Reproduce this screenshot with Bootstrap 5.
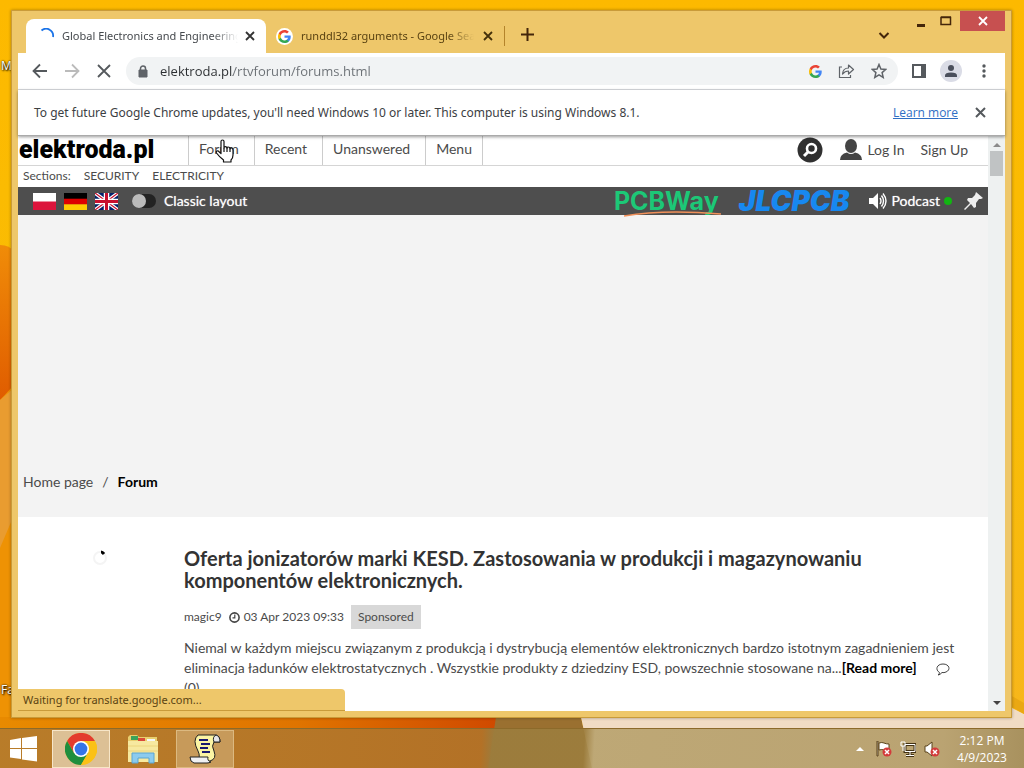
<!DOCTYPE html>
<html lang="en">
<head>
<meta charset="utf-8">
<meta name="viewport" content="width=device-width, initial-scale=1">
<title>Global Electronics and Engineering Forum</title>
<link href="https://cdn.jsdelivr.net/npm/bootstrap@5.3.0/dist/css/bootstrap.min.css" rel="stylesheet">
<style>
:root { --frame: #eec76a; --ui: "Open Sans", "Noto Sans", sans-serif; --site: Lato, "Noto Sans", sans-serif; }
body { font-family: var(--ui); font-size: 12px; line-height: 20px; color: #3c4043; }
button { background: none; border: 0; padding: 0; color: inherit; line-height: 1; }
svg { display: block; flex: none; }
.wallpaper { position: absolute; inset: 0; width: 100%; height: 100%; }
.desk-label { position: absolute; left: 1px; color: #fff; text-shadow: 1px 1px 2px #000, 0 0 2px #000; }
.desk-area { padding: 10px 12px 10px 11px; }
.win { background: var(--frame); border: 1px solid #c99b3a; padding: 0 6px 6px; box-shadow: 0 0 3px #0005; }
.strip { height: 42px; padding-left: 8px; }
.browser-tab { height: 34px; width: 240px; padding: 0 10px 0 14px; gap: 6px; }
.browser-tab.current { background: #fff; border-radius: 8px 8px 0 0; color: #45494d; }
.tab-title { flex: 1; white-space: nowrap; overflow: hidden; text-align: left; font-family: "Noto Sans", sans-serif; font-size: 11px;
  -webkit-mask-image: linear-gradient(90deg, #000 85%, transparent); mask-image: linear-gradient(90deg, #000 85%, transparent); }
.other { width: 239px; color: #5a4312; border-right: 1px solid #b4842b; height: 20px; margin-top: 8px; padding-left: 10px; gap: 8px; }
.disc { background: #fff; border-radius: 50%; padding: 2px; }
.win-ctl { color: #44260a; height: 20px; margin-left: 20px; }
.win-close { background: #c75050; width: 45px; height: 20px; color: #fff; }
.toolbar { height: 37px; border-bottom: 1px solid #dadce0; padding: 0 13px 0 14px; color: #5f6368; background: #fff; gap: 14px; }
.nav-btns { gap: 16px; }
.omni { background: #f1f3f4; border-radius: 14px; height: 28px; padding: 0 11px 0 12px; }
.omni input { flex: 1; min-width: 0; border: 0; outline: 0; padding: 0; font-size: 13px; color: transparent;
  background: linear-gradient(90deg, #2b2e31 77px, #6a6f74 77px); -webkit-background-clip: text; background-clip: text; }
.avatar { background: #dadce6; border-radius: 50%; padding: 4px; }
.info { height: 46px; padding: 0 18px 0 16px; background: #fff; border-bottom: 1px solid #aaa; box-shadow: 0 1px 3px #0006; z-index: 2; position: relative; }
.info span { font-family: "Noto Sans", sans-serif; }
.info a { color: #2f6fc4; }
.view { background: #fff; min-height: 0; font-family: var(--site); color: #4b4b4b; }
.doc { min-width: 0; overflow: hidden; }
.top { height: 30px; border-bottom: 1px solid #d5d5d5; font-size: 14px; }
.brand-name { font: 900 25px/28px Roboto, sans-serif; color: #000; text-decoration: none; width: 170px; padding-left: 1px; }
.site-link { color: #4b4b4b; text-decoration: none; }
.menu-item { padding: 3px 15px 0 10px; border-left: 1px solid #ccc; }
.menu-item:last-child { border-right: 1px solid #ccc; padding-right: 10px; }
.account { padding-bottom: 2px; }
.sections { height: 21px; padding-left: 5px; gap: 13px; font-size: 12px; }
.dark { height: 28px; background: #4e4e4e; color: #fff; font-size: 14px; padding: 0 4px 0 15px; }
.dark label, .dark span { text-shadow: 0 0 1px #fffa; }
.toggle { appearance: none; width: 24px; height: 14px; border-radius: 7px; background: #232323; margin: 0 8px 0 14px; }
.toggle::before { content: ""; display: block; width: 14px; height: 14px; border-radius: 50%; background: #bbb; }
.pcb { font: 700 25px/24px Inter, sans-serif; color: #1cc877; text-decoration: none; position: relative; }
.swoosh { position: absolute; left: 10px; top: 21px; }
.jlc { font: italic 900 28px/26px Inter, sans-serif; color: #1788f0; text-decoration: none; }
.live { width: 8px; height: 8px; border-radius: 50%; background: #12b512; }
.banner { height: 302px; background: #f3f3f3; padding: 0 5px 25px; font-size: 14px; }
.slash { margin: 0 9px; }
.thumb { width: 166px; padding: 33px 0 0 75px; }
.story { padding: 30px 32px 0 0; min-width: 0; font-size: 14px; }
.story h1 { font-size: 20px; line-height: 22px; font-weight: 700; color: #333; margin: 0 0 14px; }
.meta { font-size: 12px; height: 24px; margin-bottom: 9px; gap: 7px; }
.tag { background: #d8d8d8; padding: 2px 7px; height: 24px; }
.more { color: #000; font-weight: 700; text-decoration: none; }
.rail { width: 17px; background: #eef1f1; padding: 6px 0 5px; }
.grip { width: 13px; height: 25px; background: #c0c3c4; margin-top: 4px; }
.status { position: absolute; left: 0; bottom: 0; width: 327px; height: 22px; background: var(--frame); border-radius: 0 4px 0 0; padding: 1px 5px; color: #5a4312; font-family: "Noto Sans", sans-serif; font-size: 11px; border-bottom: 1px solid #c99b3a; }
.pointer { position: absolute; left: 197px; top: 3px; z-index: 3; }
.taskbar { height: 40px; background: linear-gradient(93deg, #b57b2cee 0, #b17429ee 47%, #9c7d3dee 48%, #9c7d3dee 57%, #baa470ee 58%, #b69f6cee 92%, #a38c57ee); border-top: 1px solid #8c6a2a; position: relative; }
.task { width: 58px; height: 38px; }
.task.on { background: #dcc095; border: 1px solid #fff3; outline: 1px solid #f7e6c8; outline-offset: -1px; }
.task.open { background: #c79a5a; border: 1px solid #dcb980; }
.clock { width: 76px; line-height: 17px; color: #fff; font-size: 12px; }
</style>
</head>
<body class="vh-100 d-flex flex-column overflow-hidden position-relative">
<svg class="wallpaper" viewBox="0 0 1024 768" preserveAspectRatio="none" aria-hidden="true">
  <defs>
    <linearGradient id="sky" x1="0" y1="0" x2="0" y2="1"><stop offset="0" stop-color="#fdb900"/><stop offset=".5" stop-color="#f9bd04"/><stop offset="1" stop-color="#f7b51e"/></linearGradient>
    <linearGradient id="petal" x1="0" y1="0" x2="0" y2="1"><stop offset="0" stop-color="#f08c08"/><stop offset="1" stop-color="#e05c00"/></linearGradient>
    <linearGradient id="floor" x1="0" y1="0" x2="1" y2="0"><stop offset="0" stop-color="#e88a00"/><stop offset=".6" stop-color="#e07400"/><stop offset="1" stop-color="#d04a00"/></linearGradient>
  </defs>
  <rect width="1024" height="768" fill="url(#sky)"/>
  <path d="M0 245Q10 245 14 252V400H0z" fill="url(#petal)"/>
  <path d="M0 400L14 385V768H0z" fill="#ee9204"/><path d="M0 400L14 388V515L0 548z" fill="#e99c30"/>
  <path d="M0 717H496V768H0z" fill="url(#floor)"/>
  <path d="M496 717H581L592 768H488z" fill="#9a7030"/>
  <path d="M581 717H1012V708L1024 714V768H592z" fill="#f1dcc4"/>
  <path d="M1010 695L1024 703V714L1010 706z" fill="#eaa813"/>
</svg>
<span class="desk-label" style="top:56px">My</span>
<span class="desk-label" style="top:680px">Fa</span>

<main class="desk-area flex-grow-1 d-flex position-relative" style="min-height:0">
<div class="win flex-grow-1 d-flex flex-column" style="min-width:0">
  <header class="strip d-flex align-items-end position-relative">
    <div class="browser-tab current d-flex align-items-center">
      <svg width="16" height="16" viewBox="0 0 16 16" fill="none" stroke="#1a73e8" stroke-width="1.800"><path d="M1.500 2.500A7 7 0 0 1 13 9"/></svg>
      <span class="tab-title">Global Electronics and Engineering Forum</span>
      <button aria-label="Close tab"><svg width="12" height="12" viewBox="0 0 12 12" stroke="#333" stroke-width="1.800"><path d="M2 2l8 8M10 2l-8 8"/></svg></button>
    </div>
    <div class="browser-tab other d-flex align-items-center align-self-center">
      <span class="disc"><svg width="13" height="13" viewBox="0 0 24 24"><use href="#g"/></svg></span>
      <span class="tab-title">runddl32 arguments - Google Search</span>
      <button aria-label="Close tab"><svg width="12" height="12" viewBox="0 0 12 12" stroke="#44300a" stroke-width="1.800"><path d="M2 2l8 8M10 2l-8 8"/></svg></button>
    </div>
    <button class="ms-3 mb-2 pb-1" aria-label="New tab"><svg width="13" height="13" viewBox="0 0 13 13" stroke="#44260a" stroke-width="2"><path d="M6.500 0v13M0 6.500h13"/></svg></button>
    <button class="ms-auto me-1 mb-2 pb-1" aria-label="Search tabs"><svg width="12" height="12" viewBox="0 0 12 12" fill="none" stroke="#44260a" stroke-width="2"><path d="M1.500 4L6 8.500 10.500 4"/></svg></button>
    <div class="win-ctl d-flex align-self-start align-items-center">
      <button aria-label="Minimize"><svg width="14" height="14" viewBox="0 0 14 14"><path d="M3 10h8v3H3z" fill="currentColor"/></svg></button>
      <button class="px-2 ms-1" aria-label="Maximize"><svg width="12" height="10" viewBox="0 0 12 10" fill="none" stroke="currentColor"><path d="M1 1.500h9.500v7H1zM1 1h10" stroke-width="1.500"/></svg></button>
      <button class="win-close d-flex align-items-center justify-content-center" aria-label="Close"><svg width="10" height="10" viewBox="0 0 10 10" stroke="#fff" stroke-width="1.800"><path d="M1 1l8 8M9 1L1 9"/></svg></button>
    </div>
  </header>

  <div class="toolbar d-flex align-items-center">
    <div class="nav-btns d-flex">
      <button aria-label="Back"><svg width="16" height="16" viewBox="0 0 16 16" fill="none" stroke="#55595d" stroke-width="1.800"><path d="M15 8H2M8 1.500L1.500 8 8 14.500"/></svg></button>
      <button aria-label="Forward"><svg width="16" height="16" viewBox="0 0 16 16" fill="none" stroke="#bbb" stroke-width="1.800"><path d="M1 8h13M8 1.500L14.500 8 8 14.500"/></svg></button>
      <button aria-label="Stop"><svg width="16" height="16" viewBox="0 0 16 16" stroke="#55595d" stroke-width="1.800"><path d="M2 2l12 12M14 2L2 14"/></svg></button>
    </div>
    <div class="omni d-flex align-items-center flex-grow-1">
      <svg width="10" height="13" viewBox="0 0 10 13"><path d="M1 5h8v7H1z" fill="#5f6368" stroke="#5f6368" stroke-linejoin="round"/><path d="M2.500 5V3.500a2.500 2.500 0 015 0V5" fill="none" stroke="#5f6368" stroke-width="1.500"/></svg>
      <input class="ms-2 ps-1" type="text" aria-label="Address" value="elektroda.pl/rtvforum/forums.html">
      <svg width="13" height="13" viewBox="0 0 24 24"><g id="g"><path fill="#4285f4" d="M23.500 12.300c0-.9-.1-1.600-.2-2.300H12v4.500h6.500c-.3 1.500-1.100 2.700-2.400 3.600v3h3.900c2.200-2.100 3.500-5.100 3.500-8.800z"/><path fill="#34a853" d="M12 24c3.200 0 6-1.100 8-2.900l-3.900-3c-1.100.7-2.500 1.200-4.100 1.200-3.100 0-5.800-2.100-6.700-5H1.300v3.100C3.300 21.300 7.300 24 12 24z"/><path fill="#fbbc05" d="M5.300 14.300a7.200 7.200 0 010-4.600V6.600h-4a12 12 0 000 10.800z"/><path fill="#ea4335" d="M12 4.800c1.800 0 3.300.6 4.600 1.800L20 3.200C18 1.200 15.200 0 12 0 7.300 0 3.300 2.700 1.300 6.600l4 3.100c.9-2.800 3.600-4.900 6.700-4.900z"/></g></svg>
      <button class="ms-3" aria-label="Share"><svg width="17" height="16" viewBox="0 0 17 16" fill="none" stroke="#5f6368" stroke-width="1.200"><path d="M4 4H1.500v10.500h11V12"/><path d="M4.500 11Q5 5 10.500 5V2l5 4.500-5 4.500V8Q7 8 4.500 11z" stroke-linejoin="round"/></svg></button>
      <button class="ms-3" aria-label="Bookmark"><svg width="16" height="16" viewBox="0 0 16 16" fill="none" stroke="#5f6368" stroke-width="1.500"><path d="M8 1.500l1.900 4.500 4.900.4-3.700 3.200 1.100 4.800L8 11.900l-4.200 2.500 1.100-4.800L1.200 6.400 6.100 6z"/></svg></button>
    </div>
    <button aria-label="Side panel"><svg width="14" height="14" viewBox="0 0 14 14"><path d="M1 1h12v12H1z" fill="none" stroke="#55595d" stroke-width="2"/><path d="M9 1h4v12H9z" fill="#55595d"/></svg></button>
    <button class="avatar" aria-label="Profile"><svg width="14" height="14" viewBox="0 0 14 14" fill="#4a4f5c"><circle cx="7" cy="4" r="3"/><path d="M1 13v-1.500Q1 8.500 7 8.500t6 3V13z"/></svg></button>
    <button aria-label="Menu"><svg width="16" height="16" viewBox="0 0 16 16" fill="#55595d"><circle cx="8" cy="3" r="1.700"/><circle cx="8" cy="8" r="1.700"/><circle cx="8" cy="13" r="1.700"/></svg></button>
  </div>

  <div class="info d-flex align-items-center">
    <span>To get future Google Chrome updates, you'll need Windows 10 or later. This computer is using Windows 8.1.</span>
    <a class="ms-auto" href="#">Learn more</a>
    <button class="ms-3" aria-label="Dismiss"><svg width="13" height="13" viewBox="0 0 13 13" stroke="#55595d" stroke-width="2"><path d="M2 2l9 9M11 2l-9 9"/></svg></button>
  </div>

  <div class="view flex-grow-1 d-flex position-relative">
    <div class="doc flex-grow-1">
      <div class="top d-flex">
        <a class="brand-name" href="#">elektroda.pl</a>
        <nav class="d-flex"><a class="site-link menu-item" href="#">Forum</a><a class="site-link menu-item" href="#">Recent</a><a class="site-link menu-item" href="#">Unanswered</a><a class="site-link menu-item" href="#">Menu</a></nav>
        <div class="account d-flex align-items-center ms-auto pe-3 me-1">
          <button class="me-3" aria-label="Search"><svg width="26" height="26" viewBox="0 0 26 26" fill="none" stroke="#fff"><circle cx="13" cy="13" r="12.500" fill="#303030" stroke="none"/><circle cx="14.500" cy="11.500" r="4.500" stroke-width="2.600"/><path d="M11 15l-4 4" stroke-width="3"/></svg></button>
          <a class="site-link d-flex align-items-center" href="#"><svg class="me-1" width="24" height="22" viewBox="0 0 24 22" fill="#444"><ellipse cx="12" cy="7" rx="6" ry="7"/><path d="M1 21q0-6 7-7.500 4 3 8 0 7 1.500 7 7.500z"/></svg>Log In</a>
          <a class="site-link ms-3" href="#">Sign Up</a>
        </div>
      </div>
      <div class="sections d-flex"><span>Sections:</span><a class="site-link" href="#">SECURITY</a><a class="site-link" href="#">ELECTRICITY</a></div>
      <div class="dark d-flex align-items-center">
        <a href="#" aria-label="Polski"><svg width="23" height="17" viewBox="0 0 23 17"><path fill="#fff" d="M0 0h23v9H0z"/><path fill="#dc143c" d="M0 8.500h23V17H0z"/></svg></a>
        <a class="ms-2" href="#" aria-label="Deutsch"><svg width="23" height="17" viewBox="0 0 23 17"><path d="M0 0h23v6H0z"/><path fill="#d00" d="M0 5.700h23v6H0z"/><path fill="#fc0" d="M0 11.300h23V17H0z"/></svg></a>
        <a class="ms-2" href="#" aria-label="English"><svg width="23" height="17" viewBox="0 0 23 17"><path fill="#012169" d="M0 0h23v17H0z"/><path d="M0 0l23 17M23 0L0 17" stroke="#fff" stroke-width="3.500"/><path d="M0 0l23 17M23 0L0 17" stroke="#c8102e" stroke-width="1.200"/><path d="M11.500 0v17M0 8.500h23" stroke="#fff" stroke-width="5.500"/><path d="M11.500 0v17M0 8.500h23" stroke="#c8102e" stroke-width="3"/></svg></a>
        <input class="toggle" type="checkbox" id="classic"><label for="classic">Classic layout</label>
        <a class="pcb ms-auto" href="#">PCBWay<svg class="swoosh" width="98" height="7" viewBox="0 0 98 7" fill="none" stroke="#f0905a" stroke-width="1.500"><path d="M0 6Q40-1 97 4"/></svg></a>
        <a class="jlc ms-3 ps-1" href="#">JLCPCB</a>
        <span class="d-flex align-items-center ms-3 ps-1"><svg class="me-1" width="18" height="16" viewBox="0 0 18 16"><path fill="#fff" d="M0 5h4l5-5v16l-5-5H0z"/><path d="M11 5q2 3 0 6M12.500 2.500q4 5.500 0 11M14 .5q6 7.500 0 15" fill="none" stroke="#fff" stroke-width="1.400"/></svg>Podcast</span>
        <span class="live ms-1"></span>
        <button class="ms-2 ps-1" aria-label="Pin"><svg width="20" height="20" viewBox="0 0 20 20" fill="#eee"><path d="M12 1l7 6-2 1-2 0-3 4 0 4-2 1-3-4-6 6-1-1 6-6-3-3 1-2h4l3-3z"/></svg></button>
      </div>
      <div class="banner d-flex align-items-end">
        <nav aria-label="breadcrumb"><a class="site-link" href="#">Home page</a><span class="slash">/</span><b class="text-black">Forum</b></nav>
      </div>
      <article class="d-flex">
        <div class="thumb flex-shrink-0"><svg width="15" height="15" viewBox="0 0 15 15" fill="none" stroke-width="2"><circle cx="7" cy="8" r="6" stroke="#f4f4f4"/><path d="M8 2q1.500 0 3 2" stroke="#000" stroke-width="3"/></svg></div>
        <div class="story">
          <h1>Oferta jonizatorów marki KESD. Zastosowania w produkcji i magazynowaniu komponentów elektronicznych.</h1>
          <div class="meta d-flex align-items-center"><a class="site-link" href="#">magic9</a><span class="d-flex align-items-center"><svg width="11" height="11" viewBox="0 0 11 11" fill="none" stroke="#444" stroke-width="1.600"><circle cx="5.500" cy="5.500" r="4.600"/><path d="M5.800 2.500v3.300H3.500" stroke-width="1.200"/></svg><time class="ms-1">03 Apr 2023 09:33</time></span><span class="tag">Sponsored</span></div>
          <p class="m-0">Niemal w każdym miejscu związanym z produkcją i dystrybucją elementów elektronicznych bardzo istotnym zagadnieniem jest eliminacja ładunków elektrostatycznych . Wszystkie produkty z dziedziny ESD, powszechnie stosowane na...<a class="more" href="#">[Read more]</a> <svg class="d-inline-block ms-3" width="14" height="13" viewBox="0 0 14 13" fill="none" stroke="#444"><path d="M3.500 9.500C-1 7 .5 1 7 1s8 6 3 8q-2 1-4 .5Q4 12 2 12q1.500-1 1.500-2.500z"/></svg> (0)</p>
        </div>
      </article>
    </div>
    <div class="rail flex-shrink-0 d-flex flex-column align-items-center">
      <svg width="8" height="5" viewBox="0 0 8 5"><path d="M0 5l4-4 4 4z" fill="#8b8b8b"/></svg>
      <div class="grip"></div>
      <svg class="mt-auto" width="8" height="5" viewBox="0 0 8 5"><path d="M0 0h8L4 4z" fill="#444"/></svg>
    </div>
    <div class="status" role="status">Waiting for translate.google.com...</div>
    <svg class="pointer" width="20" height="25" viewBox="0 0 20 25" fill="#fff" stroke="#111" stroke-width="1.200" stroke-linejoin="round"><path d="M6 14.500V2.500q0-1.500 1.500-1.500T9 2.500V9q0-1.300 1.300-1.300T12 9.200q0-1.200 1.300-1.200T15 9.800q.3-1 1.500-.8T18 11v5q0 3-2 5v2H8.500v-2Q4 17.500 1.500 14q-.8-1.500.5-2t2 .7z"/><path d="M9 9v4M12 9v4M15 10v3"/></svg>
  </div>
</div>
</main>

<footer class="taskbar d-flex align-items-center flex-shrink-0">
  <button class="d-flex justify-content-center" style="width:48px" aria-label="Start"><svg width="28" height="26" viewBox="0 0 28 26" fill="#fff"><path d="M0 4l11-2v10H0zM12 2l15-2v12H12zM0 13h11v10L0 21.500zM12 13h15v12.500L12 23.500z"/></svg></button>
  <button class="task on d-flex align-items-center justify-content-center ms-1" aria-label="Chrome"><svg width="32" height="32" viewBox="0 0 32 32"><circle cx="16" cy="16" r="16" fill="#fbc116"/><path d="M2.100 8A16 16 0 0129.900 8H16L9 20z" fill="#e33b2e"/><path d="M2.100 8A16 16 0 0016 32l7-12H9z" fill="#1e8e3e"/><path d="M16 32l7-12a8 8 0 000-8.500L22 8h7.900A16 16 0 0116 32z" fill="#fbc116"/><circle cx="16" cy="16" r="8" fill="#fff"/><circle cx="16" cy="16" r="6.400" fill="#3575e8"/></svg></button>
  <button class="task d-flex align-items-center justify-content-center ms-1" aria-label="File Explorer"><svg width="32" height="30" viewBox="0 0 32 30"><path d="M1 3l2-2h7l2 2h18v24H1z" fill="#e8cf6e"/><path d="M4 2h7v4H4z" fill="#3aa35a"/><path d="M11 4h7v3h-7z" fill="#d94a3a"/><path d="M20 5h8v3h-8z" fill="#f4f7fa"/><path d="M1 7h30v21H1z" fill="#f7e9a0"/><path d="M1 12h30M1 17h30" stroke="#ecd57d"/><path d="M5 29V19h22v10h-5v-5H11v5z" fill="#8ccbee" stroke="#5ba5d0"/></svg></button>
  <button class="task open d-flex align-items-center justify-content-center ms-1" aria-label="Script"><svg width="32" height="30" viewBox="0 0 32 30" stroke="#222" stroke-width="1"><path d="M9 1h18q4 1 4 7h-6q-3 4 0 9 3 8-4 10H8q4-4 1-10Q3 6 9 1z" fill="#fbf4a4"/><path d="M25 8q-2-5 2-7 4 1 4 7z" fill="#e4e4e8"/><path d="M1 23h18q-1 4 3 5-2 1-4 1H5q-4-1-4-6z" fill="#f0f0f2"/><path d="M10 6h9M12 10h9M11 14h8M13 18h8" stroke="#191970" stroke-width="2"/></svg></button>
  <div class="d-flex align-items-center ms-auto">
    <button class="me-2 pe-1" aria-label="Show hidden icons"><svg width="8" height="6" viewBox="0 0 8 6"><path d="M0 5l4-4 4 4z" fill="#fff"/></svg></button>
    <svg class="me-2" width="16" height="16" viewBox="0 0 16 16"><path d="M1 0v15h1V0zM3 2q3-1 5 0t5 1v7q-3 0-5-1t-5 0z" fill="#fff" stroke="#5a431b"/><circle cx="11" cy="11" r="4.500" fill="#d33b3b"/><path d="M9 9l4 4M13 9l-4 4" stroke="#fff" stroke-width="1.500"/></svg>
    <svg class="me-2" width="16" height="16" viewBox="0 0 16 16" fill="none"><path d="M5 3.500h10v7H5zM10 11v3M6 14.500h8" stroke="#433214" stroke-width="3"/><path d="M5 3.500h10v7H5zM10 11v3M6 14.500h8M1 1h4v4H1zM3 5v5" stroke="#fff"/></svg>
    <svg width="16" height="16" viewBox="0 0 16 16"><path d="M1 5h2l5-4v14l-5-4H1z" fill="#fff" stroke="#5a431b"/><circle cx="11" cy="11" r="4.500" fill="#d33b3b"/><path d="M9 9l4 4M13 9l-4 4" stroke="#fff" stroke-width="1.500"/></svg>
    <time class="clock text-center ms-1 me-1">2:12 PM<br>4/9/2023</time>
  </div>
</footer>
<script src="https://cdn.jsdelivr.net/npm/bootstrap@5.3.0/dist/js/bootstrap.bundle.min.js"></script>
</body>
</html>
